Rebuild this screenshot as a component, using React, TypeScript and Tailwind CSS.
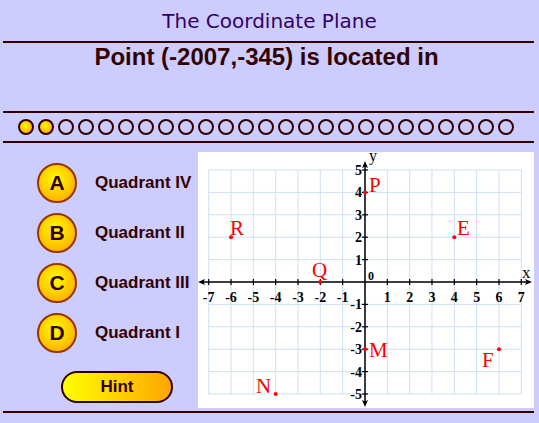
import React from 'react';

const OX = 365;
const OY = 282;
const UX = 22.33;
const UY = 22.4;

const px = (x: number) => OX + x * UX;
const py = (y: number) => OY - y * UY;

const answers = [
  { letter: 'A', text: 'Quadrant IV' },
  { letter: 'B', text: 'Quadrant II' },
  { letter: 'C', text: 'Quadrant III' },
  { letter: 'D', text: 'Quadrant I' },
];

const points = [
  { name: 'P', x: 0, y: 4, lx: 369, ly: 192 },
  { name: 'E', x: 4, y: 2, lx: 457, ly: 235 },
  { name: 'R', x: -6, y: 2, lx: 230, ly: 235 },
  { name: 'Q', x: -2, y: 0, lx: 312, ly: 277 },
  { name: 'M', x: 0, y: -3, lx: 369, ly: 357 },
  { name: 'F', x: 6, y: -3, lx: 482, ly: 367 },
  { name: 'N', x: -4, y: -5, lx: 256, ly: 393 },
];

const Rule = () => <div className="ml-[3px] mr-[5px] h-[2px] bg-[#330000]" />;

const Graph = () => {
  const xs = Array.from({ length: 15 }, (_, i) => i - 7);
  const ys = Array.from({ length: 11 }, (_, i) => i - 5);
  return (
    <svg
      width={336}
      height={256}
      viewBox="198 152 336 256"
      className="block overflow-visible"
      style={{ fontFamily: '"Liberation Serif", "Times New Roman", serif' }}
    >
      <rect x={198} y={152} width={336} height={256} fill="#ffffff" />
      {/* grid */}
      {xs.map((x) => (
        <line key={'gx' + x} x1={px(x)} y1={py(5)} x2={px(x)} y2={py(-5)} stroke="#cfe0f3" strokeWidth={1} />
      ))}
      {ys.map((y) => (
        <line key={'gy' + y} x1={px(-7)} y1={py(y)} x2={px(7)} y2={py(y)} stroke="#cfe0f3" strokeWidth={1} />
      ))}
      {/* axes */}
      <line x1={200} y1={OY} x2={530} y2={OY} stroke="#000" strokeWidth={1.5} />
      <line x1={OX} y1={163} x2={OX} y2={405} stroke="#000" strokeWidth={1.5} />
      <path d={`M198 ${OY} L205 ${OY - 3} L203.5 ${OY} L205 ${OY + 3} Z`} fill="#000" />
      <path d={`M532 ${OY} L525 ${OY - 3} L526.5 ${OY} L525 ${OY + 3} Z`} fill="#000" />
      <path d={`M${OX} 161 L${OX - 3} 168 L${OX} 166.5 L${OX + 3} 168 Z`} fill="#000" />
      <path d={`M${OX} 407 L${OX - 3} 400 L${OX} 401.5 L${OX + 3} 400 Z`} fill="#000" />
      {/* ticks */}
      {xs.filter((x) => x !== 0).map((x) => (
        <line key={'tx' + x} x1={px(x)} y1={OY - 3} x2={px(x)} y2={OY + 3} stroke="#000" strokeWidth={1.2} />
      ))}
      {ys.filter((y) => y !== 0).map((y) => (
        <line key={'ty' + y} x1={OX - 3} y1={py(y)} x2={OX + 3} y2={py(y)} stroke="#000" strokeWidth={1.2} />
      ))}
      {/* numbers */}
      {xs.filter((x) => x !== 0).map((x) => (
        <text key={'nx' + x} x={px(x)} y={302} textAnchor="middle" fontSize={14} fontWeight="bold" fill="#000">
          {x}
        </text>
      ))}
      {ys.filter((y) => y !== 0).map((y) => (
        <text key={'ny' + y} x={362} y={py(y) + 5} textAnchor="end" fontSize={14} fontWeight="bold" fill="#000">
          {y}
        </text>
      ))}
      <text x={368} y={280} fontSize={12} fontWeight="bold" fill="#000">0</text>
      <text x={369} y={161} fontSize={16} fill="#000">y</text>
      <text x={522} y={278} fontSize={17} fill="#000">x</text>
      {/* points */}
      {points.map((p) => (
        <g key={p.name}>
          <circle cx={px(p.x)} cy={py(p.y)} r={2} fill="#ff0000" />
          <text x={p.lx} y={p.ly} fontSize={21} fill="#ff0000">
            {p.name}
          </text>
        </g>
      ))}
    </svg>
  );
};

export default function App() {
  return (
    <div
      className="w-[539px] h-[423px] overflow-hidden bg-[#ccccff] text-[#330000]"
      style={{ fontFamily: '"Liberation Sans", Arial, sans-serif' }}
    >
      <div
        className="h-[41px] flex items-center justify-center text-[20px] text-[#330066]"
        style={{ fontFamily: '"DejaVu Sans", "Open Sans", sans-serif' }}
      >
        The Coordinate Plane
      </div>
      <Rule />
      <div className="h-[68px] text-center font-bold text-[24px] leading-[28px] pr-[6px]">
        Point (-2007,-345) is located in
      </div>
      <Rule />
      <div className="h-[28px] flex items-center gap-[4px] pl-[18px]">
        {Array.from({ length: 25 }, (_, i) => (
          <div
            key={i}
            className={
              i < 2
                ? 'w-4 h-4 rounded-full border-2 border-[#330000] bg-[radial-gradient(circle_at_45%_40%,#ffff00,#ffcc00_45%,#ff9900)]'
                : 'w-4 h-4 rounded-full border-2 border-[#330000]'
            }
          />
        ))}
      </div>
      <Rule />
      <div className="h-[268px] flex">
        <div className="w-[198px] flex flex-col pt-[20px]">
          <div className="flex flex-col gap-[10px] pl-[37px]">
            {answers.map((a) => (
              <div key={a.letter} className="flex items-center h-10">
                <div className="w-10 h-10 rounded-full border-2 border-[#993300] bg-[radial-gradient(circle_at_45%_40%,#ffff00,#ffcc00_50%,#ff9900)] flex items-center justify-center font-bold text-[21px]">
                  {a.letter}
                </div>
                <span className="ml-[18px] font-bold text-[17px] whitespace-nowrap">{a.text}</span>
              </div>
            ))}
          </div>
          <div className="mt-[18px] ml-[61px] w-[112px] h-[32px] rounded-full border-2 border-[#330000] bg-gradient-to-r from-[#ffff00] to-[#ffa500] flex items-center justify-center font-bold text-[17px]">
            Hint
          </div>
        </div>
        <div className="pt-[9px]">
          <Graph />
        </div>
      </div>
      <Rule />
    </div>
  );
}
